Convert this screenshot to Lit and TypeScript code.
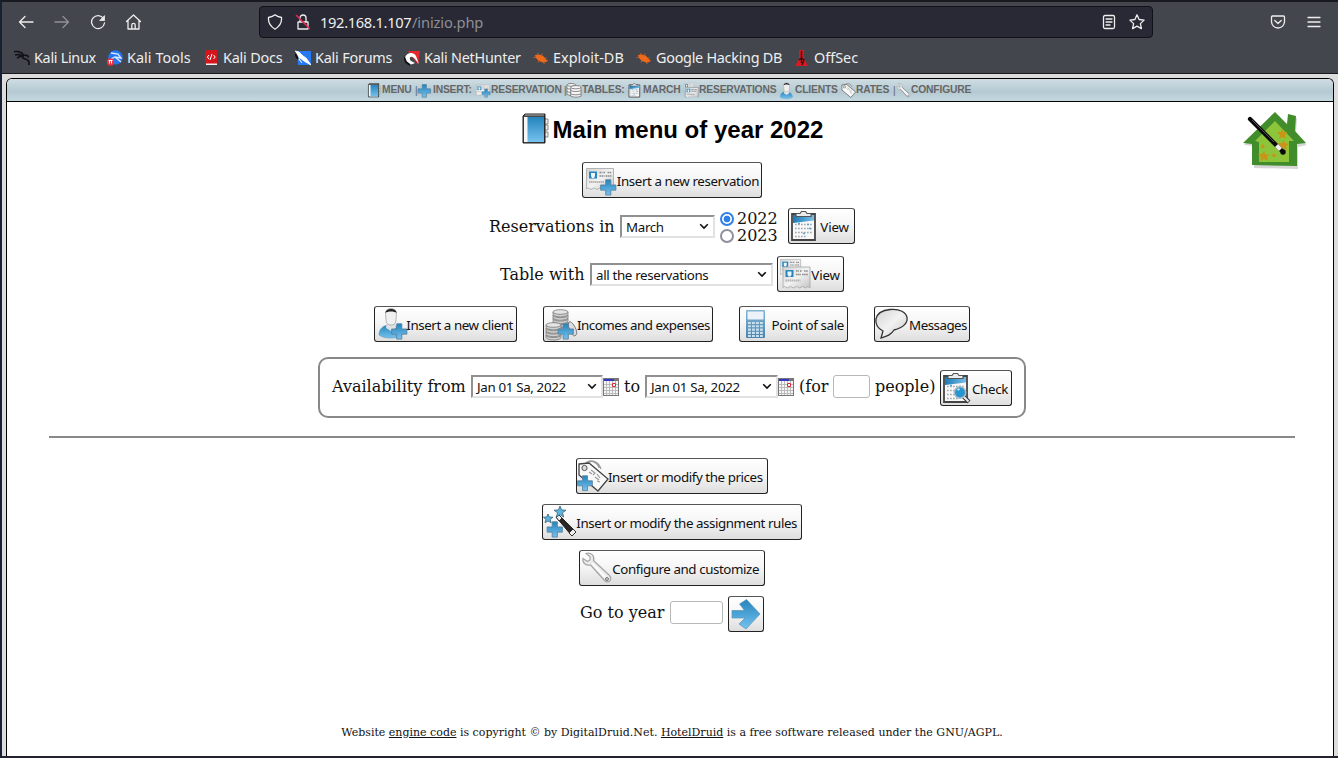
import { LitElement, html, css, svg, nothing } from "lit";
import { customElement, property } from "lit/decorators.js";
import { styleMap } from "lit/directives/style-map.js";

const plus = (x: number, y: number, s = 16) => svg`
  <path transform=${`translate(${x} ${y}) scale(${s / 16})`} d="M5.5.8h5v5h4.9v5h-4.9v4.8h-5v-4.8H.6v-5h4.9z" fill="url(#blue)" stroke="#557f9b" stroke-width=".8"/>`;

const card = (x: number, y: number, s = 1) => svg`
  <g transform=${`translate(${x} ${y}) scale(${s})`}>
    <path d="M.5.5h27v21l-2-1.600-2.500 1.600-3-1.600-3 1.600-3-1.600-3 1.600-3-1.600-3 1.600-3-1.600-1.500 1z" fill="url(#paper)" stroke="#a2a4a5" stroke-width=".8"/>
    <path d="M3 3.500h8v7H3z" fill="#2686c0"/><path d="M5 5h4v3L8 10H6L5 8z" fill="#eef5f8"/>
    <path d="M13.500 4.500h3m1 0h2m2 0h4M13.500 8h5m1 0h6" stroke="#8a8a8a" stroke-width="1.400" stroke-dasharray="1.600 .5"/>
    <path d="M3 14h15" stroke="#b5b5b5" stroke-width="1.800" stroke-dasharray="1.500 .5"/>
  </g>`;

const clipboard = svg`
  <path d="M2 4h23v26H2z" fill="#f8f8f8" stroke="#444" stroke-width="1.800"/>
  <path d="M3 5h21v5.500L3 13z" fill="url(#deep)"/>
  <path d="M5 14.500h17M5 18.500h17M5 22.500h17M5 26.500h12" stroke="#a3aab0" stroke-width="1.600" stroke-dasharray="1.700 1.300"/>
  <path d="M17 14.500h2M8 13.500h2m9 5h2m-8 5h2" stroke="#5ba2cd" stroke-width="1.600"/>
  <path d="M6 6.500V3.500h4l1.500-2h4l1.500 2h4v3z" fill="#e9ebec" stroke="#555" stroke-width="1.200"/>`;

const tag = svg`
  <path d="M8 4c4-6 13-3 15 3m-14-4c5-4 12 0 13 5m-10-6c5-2 11 3 12 7" fill="none" stroke="#9a9a9a" stroke-width="1.100"/>
  <path d="M2 4l10-1 19 16-10 12L2 15z" fill="#f8f8f8" stroke="#444" stroke-width="1.300"/>
  <circle cx="7.500" cy="8" r="2.600" fill="#ddd" stroke="#555"/>
  <path d="M12 12l3 2m-1-4l4 3-2 2m4-1l3 4m-5-1l4 3m-2 1l3 1" stroke="#999" stroke-width="1.200" fill="none"/>`;

const wrench = svg`
  <path d="M2 6.500l4.500 3L9 8l0-3.500L5 1.500C10-.3 14 4 12.500 8.500L28 23c4 4 0 9-4 6L9.500 13C5 14 1 11 2 6.500z" fill="#ececec" stroke="#a5a5a5" stroke-width="1.200"/>
  <path d="M11.500 11.500L24 25" stroke="#fff" stroke-width="1.800"/><circle cx="26" cy="27" r="1.500" fill="#ccc" stroke="#777"/>`;

const person = svg`
  <path d="M2 27c0-7 5-10 11-10s12 3 12 10c-5 4-18 4-23 0z" fill="url(#blue)" stroke="#5b95b9" stroke-width=".6"/>
  <path d="M10 14h8l1 6-5 3-5-3z" fill="#e0e1e2"/><path d="M8.500 5c0-6 11-6 11 0l-.7 9c-1 4-8.600 4-9.600 0z" fill="#f0f0f0" stroke="#999" stroke-width=".7"/>
  <path d="M8.500 5c0-5.500 11-5.500 11 0-2-2-9-2-11 0z" fill="#252525"/>`;

const book = svg`
  <path d="M24 6h4v5h-4m0 1h4v5h-4m0 2h4v5h-4" fill="#eee" stroke="#8a8a8a"/>
  <path d="M3 3l2-2h20v29H3z" fill="#4a4a4a" stroke="#222"/><path d="M4 4h20v25H4z" fill="#f7f7f7"/>
  <path d="M7.500 4H24v25H7.500z" fill="url(#blue)"/><path d="M5 2h19" stroke="#aaa"/><path d="M24.500 3v27" stroke="#282828" stroke-width="1"/>`;

const coin = (x: number, y: number, n: number) => svg`
  <g transform=${`translate(${x} ${y})`} fill="#cfcfcf" stroke="#777" stroke-width=".8">
    ${Array.from({ length: n }, (_, i) => n - 1 - i).map(i => svg`<path d=${`M0 ${i * 3.4}v2.600c2 3 13 3 15 0v-2.600`}/><ellipse cx="7.500" cy=${i * 3.4} rx="7.500" ry="2.300" fill="#e5e5e5"/>`)}
  </g>`;

const icons: Record<string, unknown> = {
  book, person, tag, wrench, clipboard,
  plus: plus(-1, 2, 29),
  miniPerson: svg`<g transform="translate(-2 -1) scale(1.150)">${person}</g>`,
  miniWrench: svg`<g transform="translate(1 0) scale(1.020)">${wrench}<path d="M9.500 13L24 29M12.500 8.500L28 23" stroke="#8c8c8c" stroke-width="1.500"/></g>`,
  miniCards: svg`${card(0, 0, 0.800)}${card(2.500, 9)}<path d="M2.500 31V9.500h28V30" fill="none" stroke="#8b8b8b"/><path d="M7 25h16M16 14h12M16 18h10" stroke="#888" stroke-width="1.500" stroke-dasharray="3 1"/>`,
  reservation: svg`${card(2, 4)}${plus(16, 15, 16.500)}`,
  miniReservation: svg`${card(0, 4, 1.050)}${plus(12, 12, 19)}`,
  cards: svg`${card(1, 1, 0.750)}${card(3.500, 8.500)}`,
  stack: svg`<g fill="#f6f6f6" stroke="#666" stroke-width="1.600"><path d="M1 4v20c4 3 14 3 18 0V4"/><ellipse cx="10" cy="4" rx="9" ry="3"/><path d="M1 11c4 3 14 3 18 0M1 18c4 3 14 3 18 0"/><path d="M9 9v19c4 3 18 3 22 0V9"/><ellipse cx="20" cy="9" rx="11" ry="3.500"/><path d="M9 16c4 3 18 3 22 0M9 23c4 3 18 3 22 0"/></g>`,
  client: svg`<g transform="translate(1 0)">${person}</g>${plus(15, 15, 16.500)}`,
  money: svg`${coin(8, 4, 5)}${coin(1, 17, 4)}<path d="M24 14c3-2 10 10 7 13s-5-2-8-10z" fill="#ddd" stroke="#777"/>${plus(12.500, 15, 16.500)}`,
  calculator: svg`<rect x="5" y="2" width="19" height="28" rx="1" fill="url(#calc)"/><path d="M6.500 3.500h16v8h-16z" fill="#ebf3f9"/><path d="M7 15h15M7 18.300h15M7 21.600h15M7 24.900h15M7 28h15" stroke="#c8e0ef" stroke-width="2.100" stroke-dasharray="2.900 1.100"/>`,
  bubble: svg`<path d="M5 30l2-7C-4 18-3 3 14 1.500c20-2 24 16 4 20.500-3 5-7 6-13 8z" fill="url(#paper)" stroke="#333" stroke-width="1.300"/>`,
  search: svg`${clipboard}<path d="M21 24l6 6" stroke="#333" stroke-width="4"/><path d="M21 24l5.500 5.500" stroke="#eee" stroke-width="2"/><circle cx="18" cy="20.500" r="5.700" fill="#2695d0" stroke="#aebdc5" stroke-width="1.500"/><path d="M15.500 18l2-1" stroke="#d9f2ff" stroke-width="1.500"/>`,
  prices: svg`<g transform="translate(-1 0)">${tag}</g>${plus(-1, 15, 16)}`,
  rules: svg`<path d="M12 11l3-2 17 17-4 4z" fill="#292525" stroke="#222"/><path d="M12 11l3-2 3 3-3 3zM25 27l4-4 3 3-4 4z" fill="#eee" stroke="#333"/><path d="M16 0l1.600 4 4.400.2-3.500 2.600 1.200 4.200-3.700-2.400L12.300 11l1.300-4.200L10 4.200l4.400-.2zM4 8l1.300 3 3.700.2L6.200 13.500l1 3.200L4 15l-3 1.700 1-3.200L-.6 11.200 2.700 11z" fill="#5eb4dc" stroke="#34627a" stroke-width=".8"/>${plus(2.5, 15, 16.5)}`,
  arrow: svg`<path d="M2 12.500h12.500L9.500 6l7-4.500L30 16 16 31l-7-5 6-6H2z" fill="url(#blue)" stroke="#5795b6" stroke-width=".7"/>`,
};

@customElement("app-icon")
class AppIcon extends LitElement {
  @property() name = "";
  static styles = css`:host{display:block;width:32px;height:32px;flex:none}svg{display:block;width:100%;height:100%;overflow:visible}`;
  render() {
    return html`<svg viewBox="0 0 32 32"><defs>
      <linearGradient id="blue" x2="0" y2="1"><stop stop-color="#2384bd"/><stop offset="1" stop-color="#76c2ee"/></linearGradient>
      <linearGradient id="deep" x2="1" y2="0"><stop stop-color="#1c7ab8"/><stop offset="1" stop-color="#79bfe6"/></linearGradient>
      <linearGradient id="calc" x2="0" y2="1"><stop stop-color="#86b5d4"/><stop offset="1" stop-color="#4784ad"/></linearGradient>
      <linearGradient id="paper" x2="1" y2="1"><stop stop-color="#d3d3d3"/><stop offset=".5" stop-color="#f2f2f2"/><stop offset="1" stop-color="#c4c4c4"/></linearGradient>
    </defs>${icons[this.name]}</svg>`;
  }
}

@customElement("tool-button")
class ToolButton extends LitElement {
  @property() icon = "";
  @property() label = "";
  @property({ type: Number }) width = 36;
  @property({ type: Number }) end = 2;
  @property({ type: Number }) tracking = -0.42;
  static styles = css`
    :host{display:block;flex:none}
    button{box-sizing:border-box;height:36px;padding:0 0 0 1px;border:1px solid #222;border-top-color:#555;border-radius:3px;background:linear-gradient(#fff,#f6f6f6 45%,#dedede);display:flex;align-items:center;justify-content:space-between;font:13.333px "Noto Sans",sans-serif;color:#111;white-space:nowrap}
    app-icon{margin-right:-2px}
    span{padding-top:2px}`;
  render() {
    return html`<button style=${styleMap({ width: `${this.width}px`, letterSpacing: `${this.tracking}px`, paddingRight: `${this.label ? this.end : 1}px` })}>
      <app-icon name=${this.icon}></app-icon>${this.label ? html`<span>${this.label}</span>` : nothing}</button>`;
  }
}

const drop = (width: number, label: string) => html`<div class="select" style=${styleMap({ width: `${width}px` })}><span>${label}</span><svg width="10" height="7" viewBox="0 0 10 7"><path d="M1.200 1.200L5 5l3.800-3.800" fill="none" stroke="#111" stroke-width="1.600"/></svg></div>`;

const calendar = html`<svg class="cal" width="16" height="18" viewBox="0 0 16 18"><path d="M0 0h16v18H0z" fill="#777"/><path d="M1 3h14v14H1z" fill="#f6f6f6"/><path d="M1 1h10v2H1z" fill="#3438bd"/><path d="M1 6.500h14M1 9.500h14M1 12.500h14M1 15.500h14M3.500 3v14M6.500 3v14M9.500 3v14M12.500 3v14" stroke="#bbb"/><path d="M9.500 5.500h3v3h-3z" fill="#fff" stroke="#e02b36"/></svg>`;

const bug = svg`<path d="M2 5l4-.5 4 1.500 3 3 1 3-4 .5-4-1.500-3-3z" fill="#f26a16"/><path d="M4.500 3l1.500 4M9 3.500l-.5 4m5 0l-3 2m4.500 1l-4-.5m.5 4l-2-3m-4.500 1.500l1.500-3M.5 7.500l4-.5" stroke="#dd6424" stroke-width=".8"/>`;

const marks: [number, string, number, unknown][] = [
  [93, "Kali Linux", -0.3, svg`<path d="M0 1.500l4 0 4 1.500 1.500 2.500M1 5l4-.5 4 1.500M3 8l4-2 3 0M8 6c0 4 6 2 7 6l0 3M9 5c3 0 5 0 5.500 2.500" fill="none" stroke="#101216" stroke-width="1.700"/>`],
  [96, "Kali Tools", 0.05, svg`<circle cx="8.500" cy="7.500" r="7.200" fill="#2575f2"/><path d="M4 3l7 1 3 4-6-1-4 2m4-2l6 5" stroke="#dce9ff" stroke-width="1.300" fill="none"/><circle cx="3.500" cy="12" r="3.700" fill="#ed333b"/><path d="M1.700 10.500h3.800m-3 0v3m2-3v3" stroke="#fff"/>`],
  [92, "Kali Docs", -0.2, svg`<path d="M4 0h10v15H4q-2 0-2-2V2q0-2 2-2z" fill="#d5151b"/><path d="M3 13.500h11v1.500H3z" fill="#eee"/><path d="M6 5L4.300 7 6 9m4.500-4l1.700 2-1.700 2M9 4L7 10" stroke="#fff" fill="none"/>`],
  [109, "Kali Forums", -0.2, svg`<path d="M2 1h14v14H3z" fill="#2779f3"/><path d="M0 1l4 1 4 4 3 2 5 7-7-4-4-3-2 0 4 5" stroke="#fff" stroke-width=".9" fill="#fff"/><path d="M0 4l3 5" stroke="#111" stroke-width="2"/>`],
  [129, "Kali NetHunter", -0.24, svg`<path d="M4 1h12l-2 14z" fill="#e4262e"/><path d="M1 8c1-5 8-7 11-2l3 8-4-5C7 4 4 8 7 11l4 2c-5 3-10 1-10-5z" fill="#fff"/><path d="M0 7l2 5 4 3" stroke="#111" stroke-width="2" fill="none"/>`],
  [103, "Exploit-DB", 0.05, bug],
  [158, "Google Hacking DB", -0.27, bug],
  [80, "OffSec", 0, svg`<path d="M5 0h5v8l4 8H1l4-7z" fill="#d91921"/><path d="M7.500 1v12M5 10l2.500-2 2.500 2-2 5" stroke="#360d12" stroke-width="1.400" fill="none"/>`],
];

const nav: [string, number, string, number][] = [
  ["book", 15, "MENU", 33], ["|", 3, "", 0], ["plus", 15, "INSERT:", 43], ["miniReservation", 15, "RESERVATION", 73], ["|", 2, "", 0],
  ["stack", 16, "TABLES:", 46], ["clipboard", 15, "MARCH", 41], ["miniCards", 15, "RESERVATIONS", 81], ["miniPerson", 15, "CLIENTS", 46], ["tag", 15, "RATES", 37], ["|", 2, "", 0], ["miniWrench", 16, "CONFIGURE", 60],
];

@customElement("app-root")
class AppRoot extends LitElement {
  static styles = css`
    :host{display:block;width:1338px;height:758px;overflow:hidden;background:#dcdcdc;color:#111}
    *{box-sizing:border-box}
    .window{height:758px;border-top:2px solid #191a20;border-left:2px solid #182033;border-bottom:2px solid #22232e;display:flex;flex-direction:column}
    .chrome{height:72px;background:#44464d;border-bottom:1px solid #17191e;font-family:"Noto Sans",sans-serif;color:#eee;flex:none}
    .bar{height:40px;display:flex;align-items:center;padding:0 16px 0 16px}
    .bar>svg,.url>svg{flex:none;fill:none;stroke:#eee;stroke-width:1.300;stroke-linecap:round;stroke-linejoin:round}
    .back{margin-right:20px}.forward{margin-right:20px;opacity:.45}.reload{margin-right:19px}
    .url{width:894px;height:32px;margin-left:117px;border:1px solid #111218;border-radius:4px;background:#282934;display:flex;align-items:center;padding:0 7px;font-size:14.667px}
    .slash{margin-left:12px}
    .host{margin-left:9px;width:92px;white-space:nowrap;letter-spacing:-.33px}.path{color:#8e8f98;letter-spacing:-.13px}.reader{margin-left:auto}.star{margin-left:12px}.pocket{margin-left:117px}.menu{margin-left:20px}
    .marks{height:31px;display:flex;align-items:center;padding:0 0 0 12px;font-size:14.400px;white-space:nowrap}
    .mark{display:flex;align-items:center;gap:4px;flex:none}.mark span{margin-top:-1px}
    .page{margin:4px 4px 0;flex:1;border:1px solid #000;border-bottom:0;border-radius:6px 6px 0 0;background:#fff;display:flex;flex-direction:column;overflow:hidden}
    .nav{height:23px;border-bottom:1px solid #000;background:linear-gradient(#cfdde3,#b4c9d1 58%,#c5d9e1);display:flex;align-items:center;padding-left:360px;font:bold 10.300px "Liberation Sans",sans-serif;letter-spacing:-.18px;color:#666;white-space:nowrap;flex:none}
    .nav app-icon{height:15px;width:15px}.nav span{flex:none;margin-top:-2px}.nav .sep{font-weight:normal;margin-top:0}
    .content{position:relative;padding:0 38px 0 42px;flex:1;font:16px "DejaVu Serif",serif}
    .house{position:absolute;right:27px;top:8px}
    .row{display:flex;justify-content:center;align-items:center;height:36px}
    h1{height:32px;margin:11px 0 17px;display:flex;justify-content:center;align-items:center;font:bold 24px "Liberation Sans",sans-serif;color:#000}
    h1 span{margin:2px 0 0 1px}h1 app-icon{margin-left:-1px}
    .r2{margin-top:10px}.r3{margin-top:12px}.r4{margin-top:14px;gap:26px}
    .text{flex:none;white-space:nowrap}
    .select{height:23px;border:2px solid;border-color:#919191 #e2e2e2 #e2e2e2 #919191;padding:0 4px 0 4px;font:13.333px "Noto Sans",sans-serif;letter-spacing:-.34px;display:flex;align-items:center;justify-content:space-between;white-space:nowrap;background:#fff;flex:none}
    .select span{padding-top:1px}
    .years{display:grid;gap:0;line-height:17px;margin:2px 10px 0 5px;width:58px}
    .years label{display:flex;align-items:center;gap:3px;height:17px}
    .radio{width:14px;height:14px;border:2px solid #8f8f9d;border-radius:50%;background:#fff}.on{border-color:#3080ea;background:radial-gradient(circle,#3080ea 0 3.100px,#fff 3.700px)}
    .avail{width:708px;height:61px;border:2px solid #888;border-radius:10px;margin:15px auto 18px;padding-top:1px;display:flex;align-items:center;justify-content:center}
    .pair{display:flex;align-items:center;padding-bottom:4px;flex:none}
    .input{height:23px;border:1px solid #b8b8b8;border-radius:3px;background:#fff;flex:none}
    .cal{flex:none;display:block;margin-top:2px}
    hr{height:2px;background:#888;border:0;margin:0 0 20px}
    .lower{display:grid;gap:10px}
    .footer{font-size:11px;text-align:center;margin-top:94px;color:#111;white-space:nowrap}.footer u{text-underline-offset:1px}`;
  render() {
    return html`<div class="window">
      <div class="chrome">
        <div class="bar">
          <svg class="back" width="16" height="16" viewBox="0 0 16 16"><path d="M15 8H1.500M7 2.500L1.500 8 7 13.500"/></svg>
          <svg class="forward" width="16" height="16" viewBox="0 0 16 16"><path d="M1 8h13.500M9 2.500L14.500 8 9 13.500"/></svg>
          <svg class="reload" width="16" height="16" viewBox="0 0 16 16"><path d="M13.500 4.500A6.500 6.500 0 1 0 14.500 9"/><path d="M14.500 2v4.500H10z" fill="#eee" stroke-width=".8"/></svg>
          <svg width="17" height="16" viewBox="0 0 17 16"><path d="M1.500 7.500L8.500 1l7 6.500M3 6.500V15h11V6.500M6.800 15v-4q0-1.700 1.700-1.700t1.700 1.700v4"/></svg>
          <div class="url">
            <svg width="16" height="16" viewBox="0 0 16 16"><path d="M8 .8C10 2.500 12 3 14.500 3.500c.5 5-2 9-6.500 11.700C3.500 12.500 1 8.500 1.500 3.500 4 3 6 2.500 8 .8z"/></svg>
            <svg class="slash" width="16" height="16" viewBox="0 0 16 16"><path d="M3 8h10v7H3zM5 8V4c0-4 6-4 6 0v4"/><path d="M1.500 1.500l13 13" stroke="#e22850" stroke-width="1.600"/></svg>
            <span class="host">192.168.1.107</span><span class="path">/inizio.php</span>
            <svg class="reader" width="16" height="16" viewBox="0 0 16 16"><rect x="2.500" y="1.500" width="11" height="13" rx="1.500"/><path d="M5 5h6M5 8h6M5 11h4"/></svg>
            <svg class="star" width="16" height="16" viewBox="0 0 16 16"><path d="M8 .8l2.100 4.700 5 .6-3.700 3.500 1 5L8 12.100l-4.400 2.500 1-5L.9 6.100l5-.6z"/></svg>
          </div>
          <svg class="pocket" width="16" height="16" viewBox="0 0 16 16"><path d="M2.500 2h11q1 0 1 1v4.500a6.500 6.500 0 0 1-13 0V3q0-1 1-1zM4.800 6.500L8 9.500l3.200-3"/></svg>
          <svg class="menu" width="16" height="16" viewBox="0 0 16 16"><path d="M2 3.500h12M2 8h12M2 12.500h12"/></svg>
        </div>
        <div class="marks">${marks.map(([w, label, tracking, glyph]) => html`<div class="mark" style=${styleMap({ width: `${w}px`, letterSpacing: `${tracking}px` })}><svg width="16" height="16" viewBox="0 0 16 16">${glyph}</svg><span>${label}</span></div>`)}</div>
      </div>
      <div class="page">
        <div class="nav">${nav.map(([icon, w, label, lw]) => html`${icon === "|" ? html`<span class="sep" style=${styleMap({ width: `${w}px` })}>|</span>` : html`<app-icon name=${icon} style=${styleMap({ width: `${w}px` })}></app-icon>`}<span style=${styleMap({ width: `${lw}px` })}>${label}</span>`)}</div>
        <div class="content">
          <svg class="house" width="66" height="64" viewBox="0 0 66 64"><path d="M3 33L35 3l12 11 1-10 8 2-1 15 11 12-9 2v22L13 56V34z" transform="translate(1 2)" opacity=".16"/><path d="M3 33L35 2l12 12 1-10 8 2-1 15 11 12-9 1v22L12 55V34z" fill="#418c2b"/><path d="M15 31L35 11l19 20h-5v21H19V32z" fill="#8cc43a"/><path d="M42 19l1.500 3h4L45 25l1 4-4-2-3 2 1-4-3-3h4zm2 11l1 3 4 1-3 2 1 4-4-2-4 2 1-4-2-3h4zM24 41l1.500 3.500h4L27 47l1 4-4-2-4 2 1-4-3-3h4zm-1-7l1 2h1l-1 2-2 0-1-2zm11 9l1 2h2l-2 2-2 0-1-2z" fill="#ca9418"/><path d="M10 9l31 31" stroke="#080808" stroke-width="4.200" stroke-linecap="round"/><path d="M12 10l22 22" stroke="#666" stroke-width=".8"/><path d="M36.500 35.500l4 4" stroke="#eee" stroke-width="4.200"/><circle cx="43" cy="42" r="2.700" fill="#050505"/></svg>
          <h1><app-icon name="book"></app-icon><span>Main menu of year 2022</span></h1>
          <div class="row"><tool-button icon="reservation" label="Insert a new reservation" width="180" tracking="-.4"></tool-button></div>
          <div class="row r2"><span class="text" style=${styleMap({ width: "131px" })}>Reservations in</span>${drop(95, "March")}<div class="years"><label><i class="radio on"></i>2022</label><label><i class="radio"></i>2023</label></div><tool-button icon="clipboard" label="View" width="67" end="5" tracking="-.1"></tool-button></div>
          <div class="row r3"><span class="text" style=${styleMap({ width: "90px" })}>Table with</span>${drop(183, "all the reservations")}<tool-button style="margin-left:4px" icon="cards" label="View" width="67" end="3" tracking="-.1"></tool-button></div>
          <div class="row r4"><tool-button icon="client" label="Insert a new client" width="143" end="3"></tool-button><tool-button icon="money" label="Incomes and expenses" width="170" tracking="-.5"></tool-button><tool-button icon="calculator" label="Point of sale" width="109" end="3" tracking="-.35"></tool-button><tool-button icon="bubble" label="Messages" width="96" tracking="-.5"></tool-button></div>
          <div class="avail"><div class="pair"><span class="text" style=${styleMap({ width: "139px" })}>Availability from</span>${drop(132, "Jan 01 Sa, 2022")}${calendar}<span class="text" style=${styleMap({ width: "26px", paddingLeft: "5px" })}>to</span>${drop(133, "Jan 01 Sa, 2022")}${calendar}<span class="text" style=${styleMap({ width: "39px", paddingLeft: "5px" })}>(for</span><div class="input" style=${styleMap({ width: "37px" })}></div><span class="text" style=${styleMap({ width: "70px", paddingLeft: "5px" })}>people)</span></div><tool-button icon="search" label="Check" width="72" end="3" tracking="-.3"></tool-button></div>
          <hr>
          <div class="lower">
            <div class="row"><tool-button icon="prices" label="Insert or modify the prices" width="192" end="5"></tool-button></div>
            <div class="row"><tool-button icon="rules" label="Insert or modify the assignment rules" width="260" end="4"></tool-button></div>
            <div class="row"><tool-button icon="wrench" label="Configure and customize" width="186" end="5"></tool-button></div>
            <div class="row"><div class="pair"><span class="text" style=${styleMap({ width: "90px" })}>Go to year</span><div class="input" style=${styleMap({ width: "53px", marginRight: "5px" })}></div></div><tool-button icon="arrow" width="36"></tool-button></div>
          </div>
          <div class="footer">Website <u>engine code</u> is copyright © by DigitalDruid.Net. <u>HotelDruid</u> is a free software released under the GNU/AGPL.</div>
        </div>
      </div>
    </div>`;
  }
}
